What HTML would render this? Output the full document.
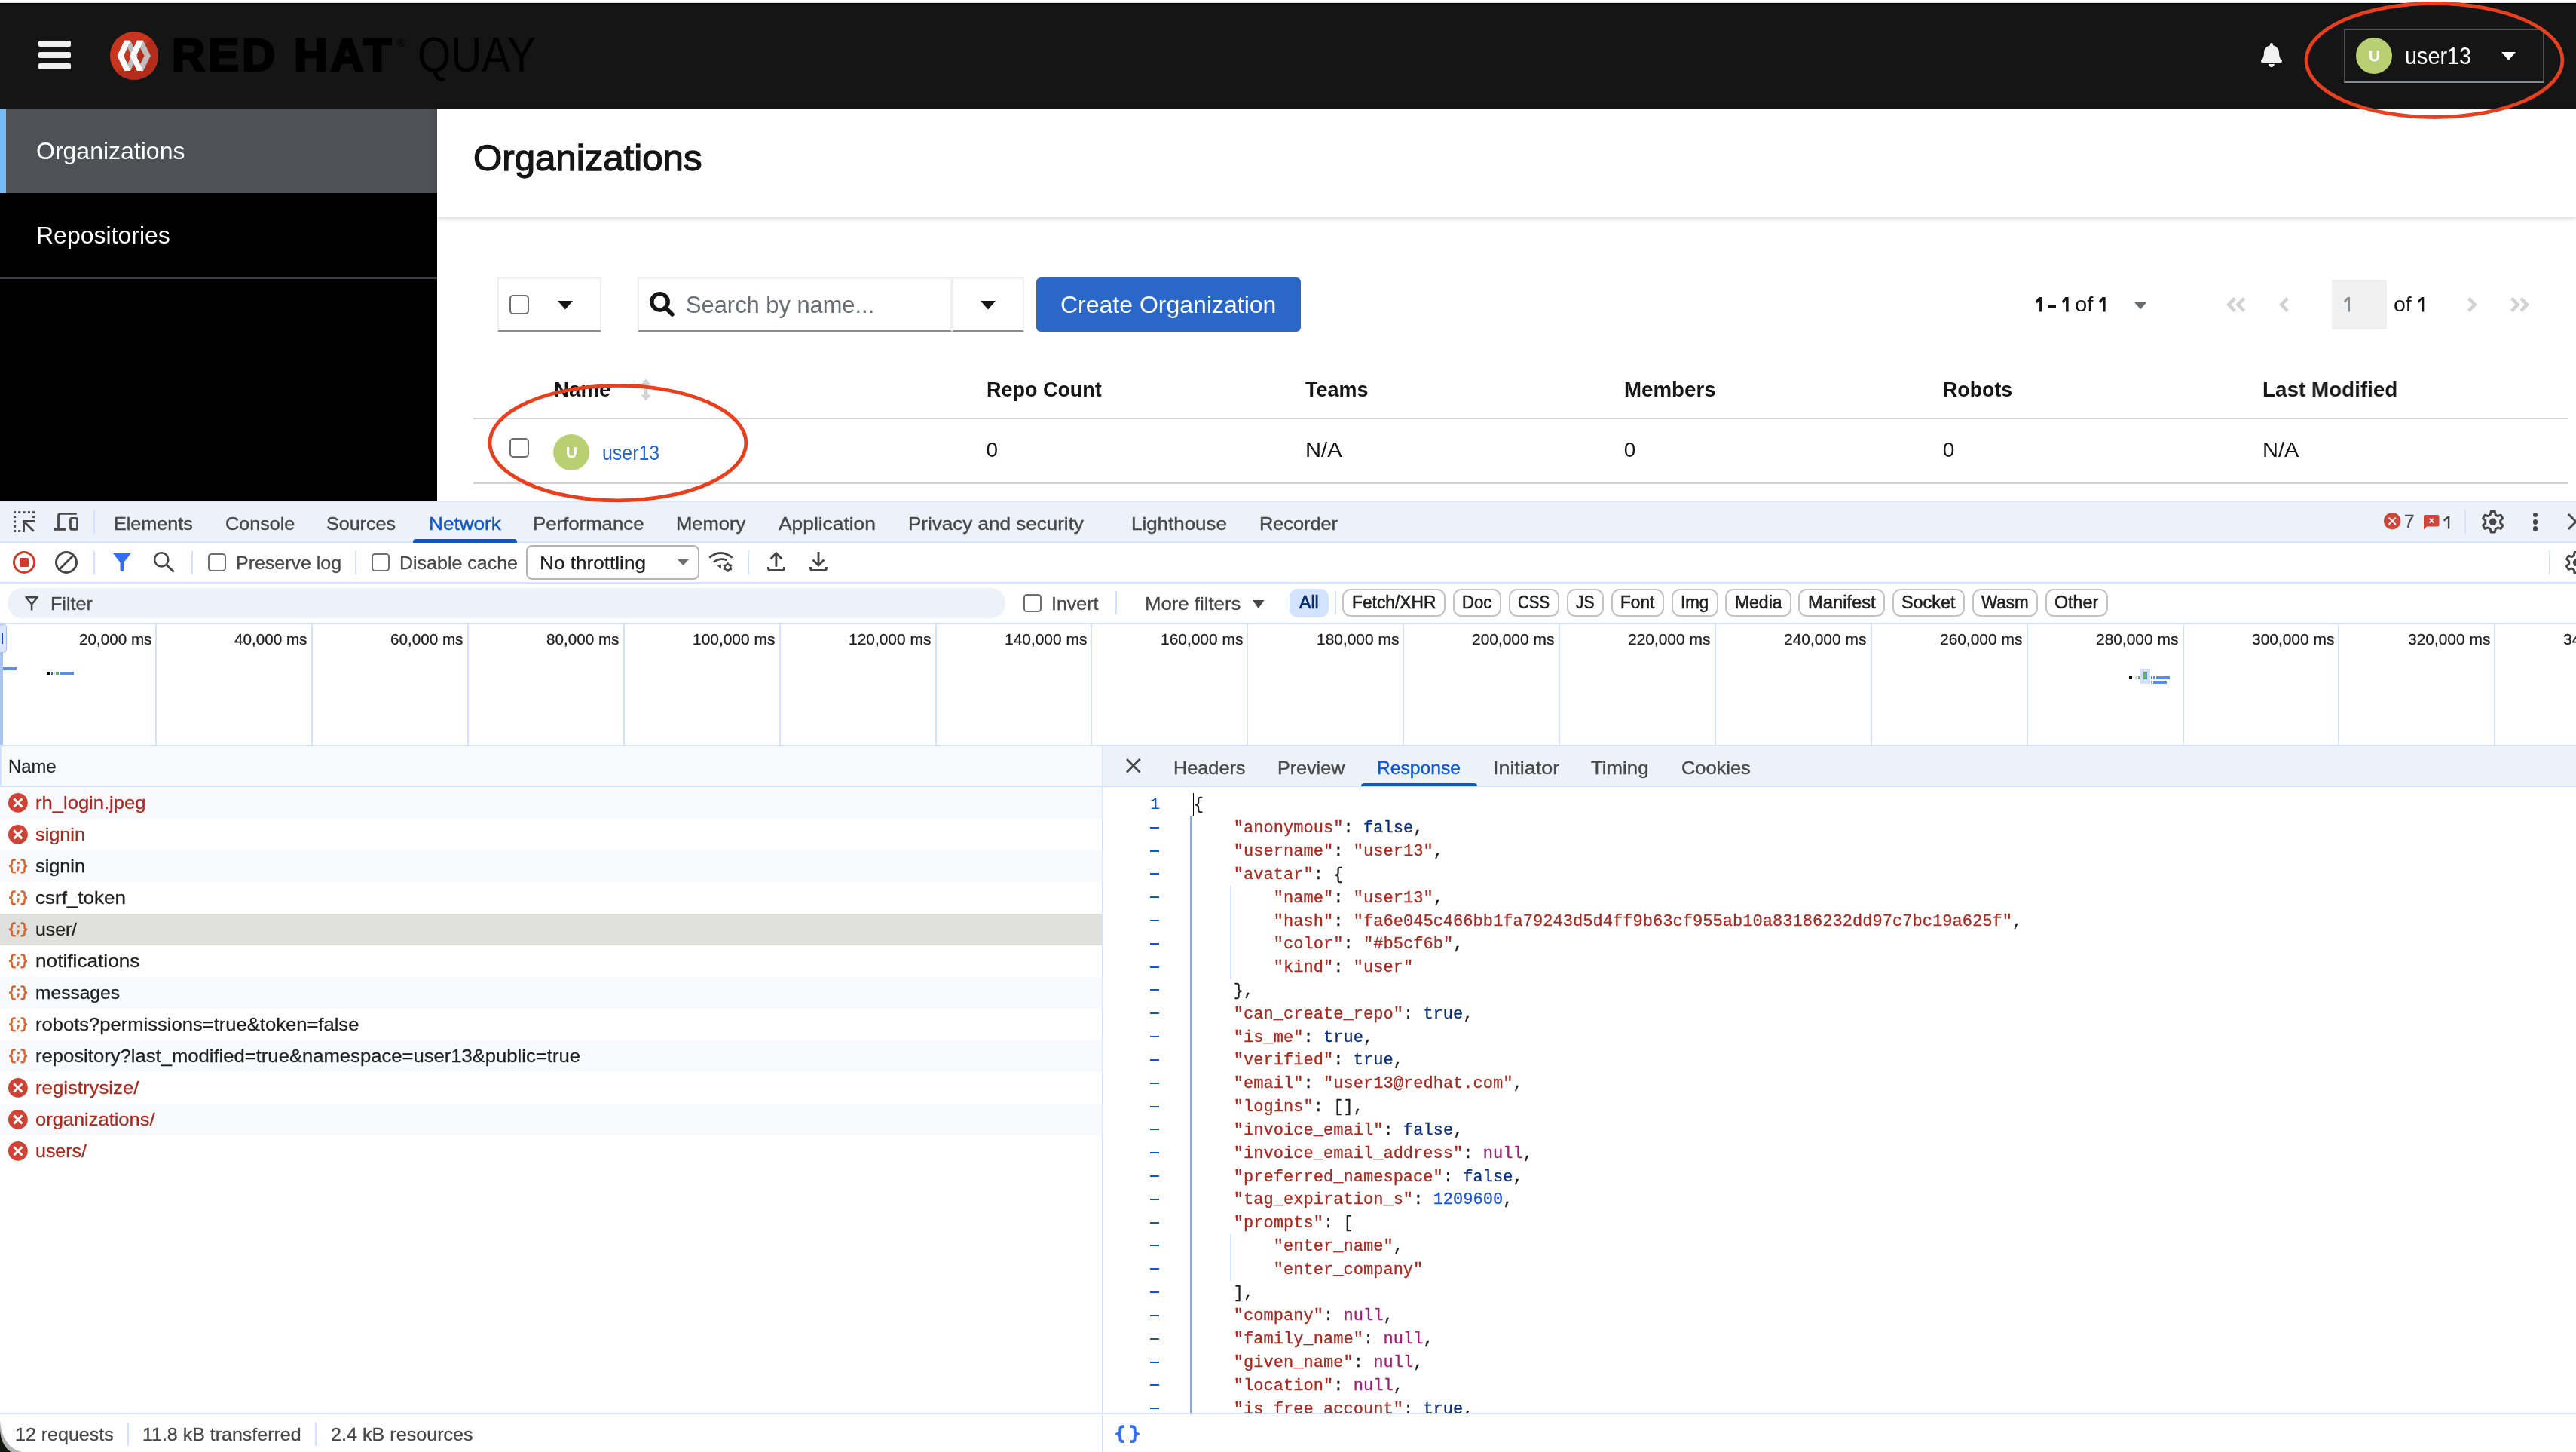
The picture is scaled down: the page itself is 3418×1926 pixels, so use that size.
<!DOCTYPE html>
<html><head><meta charset="utf-8"><title>Quay</title>
<style>
html,body{margin:0;padding:0;}
body{width:3418px;height:1926px;overflow:hidden;background:#fff;position:relative;font-family:"Liberation Sans",sans-serif;}
div,span.t,svg{position:absolute;box-sizing:border-box;}
span.t{white-space:pre;display:block;}
#root{left:0;top:0;width:3418px;height:1926px;overflow:hidden;will-change:transform;}
svg{overflow:visible;}
</style></head><body><div id="root">
<div style="left:0px;top:0px;width:3418px;height:2px;background:#ffffff;"></div>
<div style="left:0px;top:2px;width:3418px;height:2px;background:#e9e9e7;"></div>
<div style="left:0px;top:4px;width:3418px;height:140px;background:#151515;"></div>
<div style="left:0px;top:4px;width:3418px;height:1px;background:#000;"></div>
<div style="left:51px;top:54px;width:42.5px;height:7.5px;background:#f0f0f0;border-radius:2px;"></div>
<div style="left:51px;top:69px;width:42.5px;height:7.5px;background:#f0f0f0;border-radius:2px;"></div>
<div style="left:51px;top:84px;width:42.5px;height:7.5px;background:#f0f0f0;border-radius:2px;"></div>
<svg style="left:145.8px;top:42px;" width="64" height="64" viewBox="0 0 64 64">
<defs><clipPath id="lc"><circle cx="32" cy="32" r="32"/></clipPath></defs>
<circle cx="32" cy="32" r="32" fill="#c9341d"/>
<path clip-path="url(#lc)" d="M64 0 L64 64 L0 64 Z" fill="#b22e1a"/>
<g transform="translate(-145.8,-42)">
<path d="M165 53.7 L172.8 53.7 L182.4 73.9 L172.8 93.9 L165 93.9 L155.4 73.9 Z M169.1 62.9 L163.8 73.9 L169.1 84.9 L174.3 73.9 Z" fill="#bdbdbd" fill-rule="evenodd"/>
<path d="M165 53.7 L172.8 53.7 L163.8 73.9 L172.8 93.9 L165 93.9 L155.4 73.9 Z" fill="#fff"/>
<path d="M181.8 53.7 L189.8 53.7 L199.7 73.9 L189.8 93.9 L181.8 93.9 L172.2 73.9 Z M185.8 63.5 L180.5 73.9 L185.8 84.9 L191.4 73.9 Z" fill="#bdbdbd" fill-rule="evenodd"/>
<path d="M181.8 53.7 L189.8 53.7 L180.5 73.9 L189.8 93.9 L181.8 93.9 L172.2 73.9 Z" fill="#fff"/>
</g></svg>
<span class="t" style="left:228.0px;top:33.8px;height:79px;line-height:79px;font-size:61px;color:#000;font-weight:700;letter-spacing:4.120px;-webkit-text-stroke:3px #000;">RED HAT</span>
<span class="t" style="left:526.0px;top:46.5px;height:20px;line-height:20px;font-size:15px;color:#000;">®</span>
<span class="t" style="left:553.5px;top:31.3px;height:84px;line-height:84px;font-size:65px;color:#000;transform:scaleX(0.8746);transform-origin:0 50%;">QUAY</span>
<svg style="left:3000px;top:56.5px;" width="28" height="32" viewBox="0 0 28 32"><path d="M14 32c2.2 0 4-1.8 4-4h-8c0 2.2 1.8 4 4 4zm13.5-9.4c-1.2-1.3-3.5-3.2-3.5-9.6 0-4.9-3.400-8.700-8-9.700V2c0-1.100-.9-2-2-2s-2 .9-2 2v1.300C7.400 4.300 4 8.100 4 13c0 6.400-2.300 8.300-3.500 9.600-.400.400-.5.900-.5 1.400 0 1 .8 2 2 2h24c1.200 0 2-1 2-2 0-.5-.2-1-.5-1.400z" fill="#f0f0f0"/></svg>
<div style="left:3110px;top:38px;width:266px;height:72px;border:2px solid #4f5255;border-bottom-color:#8a8d90;"></div>
<div style="left:3126px;top:50px;width:48px;height:48px;background:#b8d072;border-radius:50%;"></div>
<svg style="left:3143.7px;top:66.7px;" width="12.8" height="14.6" viewBox="0 0 12.8 14.6"><path d="M1.600 0V8.200A4.800 4.800 0 0 0 11.200 8.200V0" fill="none" stroke="#fff" stroke-width="3.100"/></svg>
<span class="t" style="left:3191.0px;top:53.4px;height:42px;line-height:42px;font-size:32px;color:#fff;transform:scaleX(0.8994);transform-origin:0 50%;">user13</span>
<svg style="left:3318.5px;top:68.5px;" width="19" height="11" viewBox="0 0 19 11"><path d="M0 0H19L9.500 11Z" fill="#fff"/></svg>
<div style="left:0px;top:144px;width:580px;height:520px;background:#000;"></div>
<div style="left:0px;top:144px;width:580px;height:111.5px;background:#505156;"></div>
<div style="left:0px;top:144px;width:8px;height:111.5px;background:#73bcf7;"></div>
<span class="t" style="left:48.0px;top:179.4px;height:42px;line-height:42px;font-size:32px;color:#fff;transform:scaleX(0.9978);transform-origin:0 50%;">Organizations</span>
<span class="t" style="left:48.0px;top:291.4px;height:42px;line-height:42px;font-size:32px;color:#fff;transform:scaleX(0.9980);transform-origin:0 50%;">Repositories</span>
<div style="left:0px;top:368px;width:580px;height:2px;background:#3c3f42;"></div>
<div style="left:580px;top:144px;width:2838px;height:143.5px;background:#fff;box-shadow:0 2px 6px rgba(3,3,3,.16);"></div>
<span class="t" style="left:627.5px;top:179.1px;height:62px;line-height:62px;font-size:48px;color:#151515;transform:scaleX(1.0248);transform-origin:0 50%;-webkit-text-stroke:1.300px #151515;">Organizations</span>
<div style="left:660px;top:368px;width:137.8px;height:72px;background:#fff;border:2px solid #f0f0f0;border-bottom:2px solid #8a8d90;"></div>
<div style="left:676px;top:390.7px;width:26px;height:26px;background:#fff;border:2px solid #6e6e6e;border-radius:5px;"></div>
<svg style="left:739.5px;top:398.5px;" width="20" height="11.5" viewBox="0 0 20 11.5"><path d="M0 0H20L10 11.500Z" fill="#151515"/></svg>
<div style="left:846px;top:368px;width:417px;height:72px;background:#fff;border:2px solid #f0f0f0;border-bottom:2px solid #8a8d90;"></div>
<div style="left:1263px;top:368px;width:95.5px;height:72px;background:#fff;border:2px solid #f0f0f0;border-bottom:2px solid #8a8d90;"></div>
<svg style="left:861.7px;top:387.2px;" width="33" height="33" viewBox="0 0 33 33"><circle cx="13.500" cy="13.300" r="10.700" fill="none" stroke="#151515" stroke-width="5.400"/><path d="M21 21L30 30" stroke="#151515" stroke-width="5.400" stroke-linecap="round"/></svg>
<span class="t" style="left:909.8px;top:383.4px;height:42px;line-height:42px;font-size:32px;color:#6a6e73;transform:scaleX(0.9635);transform-origin:0 50%;">Search by name...</span>
<svg style="left:1300.5px;top:398.5px;" width="20" height="11.5" viewBox="0 0 20 11.5"><path d="M0 0H20L10 11.500Z" fill="#151515"/></svg>
<div style="left:1374.7px;top:367.6px;width:351.3px;height:72.2px;background:#2b66c9;border-radius:6px;"></div>
<span class="t" style="left:1407.0px;top:383.4px;height:42px;line-height:42px;font-size:32px;color:#fff;">Create Organization</span>
<svg style="left:2701px;top:394.3px;" width="8.6" height="19.4" viewBox="0 0 8.6 19.4"><path d="M0 5.24L4.50 0H8.6V19.4H5.1V4.02L1.93 8.56Z" fill="#151515"/></svg>
<div style="left:2718px;top:404px;width:10.2px;height:3.5px;background:#151515;"></div>
<svg style="left:2736.2px;top:394.3px;" width="8.6" height="19.4" viewBox="0 0 8.6 19.4"><path d="M0 5.24L4.50 0H8.6V19.4H5.1V4.02L1.93 8.56Z" fill="#151515"/></svg>
<span class="t" style="left:2753.4px;top:385.9px;height:36px;line-height:36px;font-size:28px;color:#151515;transform:scaleX(1.0449);transform-origin:0 50%;">of</span>
<svg style="left:2785.3px;top:394.3px;" width="8.6" height="19.4" viewBox="0 0 8.6 19.4"><path d="M0 5.24L4.50 0H8.6V19.4H5.1V4.02L1.93 8.56Z" fill="#151515"/></svg>
<svg style="left:2831.9px;top:400.5px;" width="16.2" height="9.2" viewBox="0 0 16.2 9.2"><path d="M0 0H16.200L8.100 9.200Z" fill="#6a6e73"/></svg>
<svg style="left:2953.6px;top:393.5px;" width="25.2" height="20" viewBox="0 0 25.2 20"><g ><path d="M11.300 1.600L3.100 10L11.300 18.400" fill="none" stroke="#d2d2d2" stroke-width="4.400"/><path d="M11.300 1.600L3.100 10L11.300 18.400" transform="translate(12.300,0)" fill="none" stroke="#d2d2d2" stroke-width="4.400"/></g></svg>
<svg style="left:3023.5px;top:393.5px;" width="12.9" height="20" viewBox="0 0 12.9 20"><g ><path d="M11.300 1.600L3.100 10L11.300 18.400" fill="none" stroke="#d2d2d2" stroke-width="4.400"/></g></svg>
<div style="left:3093.8px;top:370.8px;width:73px;height:66.2px;background:#f0f0f0;"></div>
<svg style="left:3109.5px;top:394.3px;" width="8" height="19.4" viewBox="0 0 8 19.4"><path d="M0 5.24L4.80 0H8V19.4H5.4V2.99L1.43 7.71Z" fill="#8a8d90"/></svg>
<span class="t" style="left:3175.7px;top:385.9px;height:36px;line-height:36px;font-size:28px;color:#151515;transform:scaleX(1.0192);transform-origin:0 50%;">of</span>
<svg style="left:3207.5px;top:394.3px;" width="8.3" height="19.4" viewBox="0 0 8.3 19.4"><path d="M0 5.24L5.10 0H8.3V19.4H5.700000000000001V2.99L1.43 7.71Z" fill="#151515"/></svg>
<svg style="left:3273.5px;top:393.5px;" width="12.9" height="20" viewBox="0 0 12.9 20"><g transform="translate(12.9,0) scale(-1,1)"><path d="M11.300 1.600L3.100 10L11.300 18.400" fill="none" stroke="#d2d2d2" stroke-width="4.400"/></g></svg>
<svg style="left:3331.2px;top:393.5px;" width="25.2" height="20" viewBox="0 0 25.2 20"><g transform="translate(25.2,0) scale(-1,1)"><path d="M11.300 1.600L3.100 10L11.300 18.400" fill="none" stroke="#d2d2d2" stroke-width="4.400"/><path d="M11.300 1.600L3.100 10L11.300 18.400" transform="translate(12.300,0)" fill="none" stroke="#d2d2d2" stroke-width="4.400"/></g></svg>
<span class="t" style="left:734.6px;top:499.4px;height:36px;line-height:36px;font-size:28px;color:#151515;font-weight:700;transform:scaleX(0.9887);transform-origin:0 50%;">Name</span>
<svg style="left:851px;top:503px;" width="12" height="28" viewBox="0 0 12 28"><path d="M6 0L12 7H0Z M6 28L12 21H0Z M3.900 6H8.100V22H3.900Z" fill="#d2d2d2" stroke="#d2d2d2" stroke-width="0.800" stroke-linejoin="round"/></svg>
<span class="t" style="left:1309.0px;top:499.4px;height:36px;line-height:36px;font-size:28px;color:#151515;font-weight:700;transform:scaleX(0.9632);transform-origin:0 50%;">Repo Count</span>
<span class="t" style="left:1731.8px;top:499.4px;height:36px;line-height:36px;font-size:28px;color:#151515;font-weight:700;transform:scaleX(0.9626);transform-origin:0 50%;">Teams</span>
<span class="t" style="left:2155.3px;top:499.4px;height:36px;line-height:36px;font-size:28px;color:#151515;font-weight:700;transform:scaleX(0.9891);transform-origin:0 50%;">Members</span>
<span class="t" style="left:2578.3px;top:499.4px;height:36px;line-height:36px;font-size:28px;color:#151515;font-weight:700;transform:scaleX(0.9562);transform-origin:0 50%;">Robots</span>
<span class="t" style="left:3001.7px;top:499.4px;height:36px;line-height:36px;font-size:28px;color:#151515;font-weight:700;transform:scaleX(0.9937);transform-origin:0 50%;">Last Modified</span>
<div style="left:628px;top:554px;width:2780px;height:2px;background:#d2d2d2;"></div>
<div style="left:628px;top:639.5px;width:2780px;height:2px;background:#d2d2d2;"></div>
<div style="left:676px;top:581px;width:26px;height:26px;background:#fff;border:2px solid #6e6e6e;border-radius:5px;"></div>
<div style="left:733.9px;top:575.8px;width:48.4px;height:48.4px;background:#b8d072;border-radius:50%;"></div>
<svg style="left:751.8px;top:592.6px;" width="12.8" height="14.6" viewBox="0 0 12.8 14.6"><path d="M1.600 0V8.200A4.800 4.800 0 0 0 11.200 8.200V0" fill="none" stroke="#fff" stroke-width="3.100"/></svg>
<span class="t" style="left:799.3px;top:582.7px;height:36px;line-height:36px;font-size:28px;color:#2b66c9;transform:scaleX(0.8900);transform-origin:0 50%;">user13</span>
<span class="t" style="left:1308.5px;top:578.9px;height:36px;line-height:36px;font-size:28px;color:#151515;">0</span>
<span class="t" style="left:1731.8px;top:578.9px;height:36px;line-height:36px;font-size:28px;color:#151515;transform:scaleX(1.0434);transform-origin:0 50%;">N/A</span>
<span class="t" style="left:2154.8px;top:578.9px;height:36px;line-height:36px;font-size:28px;color:#151515;">0</span>
<span class="t" style="left:2577.8px;top:578.9px;height:36px;line-height:36px;font-size:28px;color:#151515;">0</span>
<span class="t" style="left:3001.7px;top:578.9px;height:36px;line-height:36px;font-size:28px;color:#151515;transform:scaleX(1.0348);transform-origin:0 50%;">N/A</span>
<div style="left:0px;top:664px;width:3418px;height:1262px;background:#fff;"></div>
<div style="left:0px;top:664px;width:3418px;height:56px;background:#edf1fa;border-top:2px solid #d3e3fd;border-bottom:2px solid #d3e3fd;"></div>
<div style="left:124px;top:676px;width:2px;height:32px;background:#d3e3fd;"></div>
<span class="t" style="left:150.6px;top:679.3px;height:32px;line-height:32px;font-size:24.3px;color:#474747;transform:scaleX(1.0347);transform-origin:0 50%;-webkit-text-stroke:0.4px currentColor;">Elements</span>
<span class="t" style="left:299.0px;top:679.3px;height:32px;line-height:32px;font-size:24.3px;color:#474747;transform:scaleX(1.0353);transform-origin:0 50%;-webkit-text-stroke:0.4px currentColor;">Console</span>
<span class="t" style="left:432.8px;top:679.3px;height:32px;line-height:32px;font-size:24.3px;color:#474747;transform:scaleX(1.0321);transform-origin:0 50%;-webkit-text-stroke:0.4px currentColor;">Sources</span>
<span class="t" style="left:568.7px;top:679.3px;height:32px;line-height:32px;font-size:24.3px;color:#0b57d0;transform:scaleX(1.0761);transform-origin:0 50%;-webkit-text-stroke:0.4px currentColor;">Network</span>
<span class="t" style="left:706.5px;top:679.3px;height:32px;line-height:32px;font-size:24.3px;color:#474747;transform:scaleX(1.0604);transform-origin:0 50%;-webkit-text-stroke:0.4px currentColor;">Performance</span>
<span class="t" style="left:896.7px;top:679.3px;height:32px;line-height:32px;font-size:24.3px;color:#474747;transform:scaleX(1.0519);transform-origin:0 50%;-webkit-text-stroke:0.4px currentColor;">Memory</span>
<span class="t" style="left:1033.0px;top:679.3px;height:32px;line-height:32px;font-size:24.3px;color:#474747;transform:scaleX(1.0844);transform-origin:0 50%;-webkit-text-stroke:0.4px currentColor;">Application</span>
<span class="t" style="left:1204.6px;top:679.3px;height:32px;line-height:32px;font-size:24.3px;color:#474747;transform:scaleX(1.0712);transform-origin:0 50%;-webkit-text-stroke:0.4px currentColor;">Privacy and security</span>
<span class="t" style="left:1500.8px;top:679.3px;height:32px;line-height:32px;font-size:24.3px;color:#474747;transform:scaleX(1.0673);transform-origin:0 50%;-webkit-text-stroke:0.4px currentColor;">Lighthouse</span>
<span class="t" style="left:1670.8px;top:679.3px;height:32px;line-height:32px;font-size:24.3px;color:#474747;transform:scaleX(1.0407);transform-origin:0 50%;-webkit-text-stroke:0.4px currentColor;">Recorder</span>
<div style="left:548px;top:715px;width:137.6px;height:4.5px;background:#0b57d0;border-radius:4px 4px 0 0;"></div>
<svg style="left:3162.8px;top:679.7px;" width="22.4" height="22.4" viewBox="0 0 22.4 22.4"><circle cx="11.200" cy="11.200" r="11.200" fill="#d0453a"/><path d="M6.600 6.600L15.800 15.800M15.800 6.600L6.600 15.800" stroke="#fff" stroke-width="1.900"/></svg>
<span class="t" style="left:3190.0px;top:675.9px;height:32px;line-height:32px;font-size:24.3px;color:#474747;-webkit-text-stroke:0.300px currentColor;">7</span>
<svg style="left:3216.3px;top:682.5px;" width="20.5" height="19.5" viewBox="0 0 20.5 19.5"><path d="M2 0H18.500C19.600 0 20.500 .9 20.500 2V13.500C20.500 14.600 19.600 15.500 18.500 15.500H4L0 19.500V2C0 .9 .9 0 2 0Z" fill="#d0453a"/><path d="M7.500 4.800L13 10.300M13 4.800L7.500 10.300" stroke="#fff" stroke-width="1.700"/></svg>
<svg style="left:3241.6px;top:685.2px;" width="8.3" height="16.6" viewBox="0 0 8.3 16.6"><path d="M0 4.48L5.30 0H8.3V16.6H5.9V2.76L1.32 6.76Z" fill="#474747"/></svg>
<div style="left:3270px;top:676px;width:2px;height:31.5px;background:#d3e3fd;"></div>
<svg style="left:3292px;top:677.1px;" width="31.4" height="30.9" viewBox="0 0 30 29.5"><path d="M12.500 1.500H17.500L18.300 5.600L21.200 7.300L25.100 5.900L27.600 10.200L24.500 12.900V16.300L27.600 19L25.100 23.300L21.200 21.900L18.300 23.600L17.500 27.700H12.500L11.700 23.600L8.800 21.900L4.900 23.300L2.400 19L5.500 16.300V12.900L2.400 10.200L4.900 5.900L8.800 7.300L11.700 5.600Z" fill="none" stroke="#474747" stroke-width="2.800" stroke-linejoin="round"/><circle cx="15" cy="14.600" r="4.600" fill="#474747"/></svg>
<div style="left:3360.6px;top:679.7px;width:6.6px;height:6.6px;background:#474747;border-radius:50%;"></div>
<div style="left:3360.6px;top:689.0px;width:6.6px;height:6.6px;background:#474747;border-radius:50%;"></div>
<div style="left:3360.6px;top:698.3000000000001px;width:6.6px;height:6.6px;background:#474747;border-radius:50%;"></div>
<svg style="left:3407px;top:681px;" width="22" height="22" viewBox="0 0 22 22"><path d="M1 1L21 21M21 1L1 21" stroke="#474747" stroke-width="3"/></svg>
<div style="left:0px;top:720px;width:3418px;height:54px;background:#fff;border-bottom:2px solid #d3e3fd;"></div>
<svg style="left:16.8px;top:731.2px;" width="30" height="30" viewBox="0 0 30 30"><circle cx="15" cy="15" r="13.500" fill="none" stroke="#d03b2f" stroke-width="3"/><rect x="9" y="9" width="12" height="12" rx="1.500" fill="#d03b2f"/></svg>
<svg style="left:73px;top:731.2px;" width="30" height="30" viewBox="0 0 30 30"><circle cx="15" cy="15" r="13.500" fill="none" stroke="#474747" stroke-width="3"/><path d="M24.500 5.500L5.500 24.500" stroke="#474747" stroke-width="3"/></svg>
<div style="left:124px;top:730.5px;width:2px;height:31px;background:#d3e3fd;"></div>
<div style="left:254px;top:730.5px;width:2px;height:31px;background:#d3e3fd;"></div>
<div style="left:276.3px;top:734.2px;width:23.5px;height:23.5px;background:#fff;border:2px solid #6e6e6e;border-radius:4.500px;"></div>
<span class="t" style="left:312.5px;top:730.9px;height:32px;line-height:32px;font-size:24.3px;color:#474747;transform:scaleX(1.0270);transform-origin:0 50%;-webkit-text-stroke:0.300px currentColor;">Preserve log</span>
<div style="left:470.7px;top:730.5px;width:2px;height:31px;background:#d3e3fd;"></div>
<div style="left:493px;top:734.2px;width:23.5px;height:23.5px;background:#fff;border:2px solid #6e6e6e;border-radius:4.500px;"></div>
<span class="t" style="left:530.0px;top:730.9px;height:32px;line-height:32px;font-size:24.3px;color:#474747;transform:scaleX(1.0286);transform-origin:0 50%;-webkit-text-stroke:0.300px currentColor;">Disable cache</span>
<div style="left:698.3px;top:722.6px;width:229.4px;height:46.2px;background:#fff;border:2px solid #b4b4b4;border-radius:8px;"></div>
<span class="t" style="left:716.0px;top:730.9px;height:32px;line-height:32px;font-size:24.3px;color:#1f1f1f;transform:scaleX(1.0762);transform-origin:0 50%;-webkit-text-stroke:0.300px currentColor;">No throttling</span>
<svg style="left:898.5px;top:742px;" width="15" height="8" viewBox="0 0 15 8"><path d="M0 0H15L7.500 8Z" fill="#6e6e6e"/></svg>
<div style="left:992px;top:730px;width:2px;height:32px;background:#d3e3fd;"></div>
<div style="left:3382px;top:730px;width:2px;height:31.5px;background:#d3e3fd;"></div>
<svg style="left:3402.5px;top:731.2px;" width="31.4" height="30.9" viewBox="0 0 30 29.5"><path d="M12.500 1.500H17.500L18.300 5.600L21.200 7.300L25.100 5.900L27.600 10.200L24.500 12.900V16.300L27.600 19L25.100 23.300L21.200 21.900L18.300 23.600L17.500 27.700H12.500L11.700 23.600L8.800 21.900L4.900 23.300L2.400 19L5.500 16.300V12.900L2.400 10.200L4.900 5.900L8.800 7.300L11.700 5.600Z" fill="none" stroke="#474747" stroke-width="2.800" stroke-linejoin="round"/><circle cx="15" cy="14.600" r="4.600" fill="#474747"/></svg>
<div style="left:0px;top:774px;width:3418px;height:54px;background:#fff;border-bottom:2px solid #d3e3fd;"></div>
<div style="left:9.7px;top:780.4px;width:1324.3px;height:39.6px;background:#edf1fa;border-radius:20px;"></div>
<span class="t" style="left:66.8px;top:784.9px;height:32px;line-height:32px;font-size:24.3px;color:#474747;transform:scaleX(1.0353);transform-origin:0 50%;-webkit-text-stroke:0.300px currentColor;">Filter</span>
<div style="left:1358px;top:788.2px;width:23.5px;height:23.5px;background:#fff;border:2px solid #6e6e6e;border-radius:4.500px;"></div>
<span class="t" style="left:1394.8px;top:784.9px;height:32px;line-height:32px;font-size:24.3px;color:#474747;transform:scaleX(1.0284);transform-origin:0 50%;-webkit-text-stroke:0.300px currentColor;">Invert</span>
<div style="left:1480.4px;top:784px;width:2px;height:31px;background:#d3e3fd;"></div>
<span class="t" style="left:1519.0px;top:784.9px;height:32px;line-height:32px;font-size:24.3px;color:#474747;transform:scaleX(1.0602);transform-origin:0 50%;-webkit-text-stroke:0.300px currentColor;">More filters</span>
<svg style="left:1662px;top:796px;" width="15.5" height="11" viewBox="0 0 15.5 11"><path d="M0 0H15.500L7.750 11Z" fill="#474747"/></svg>
<div style="left:1711px;top:781px;width:52px;height:37.8px;background:#d3e3fd;border-radius:11px;"></div>
<span class="t" style="left:1724.0px;top:784.4px;height:31px;line-height:31px;font-size:23.5px;color:#062e6f;transform:scaleX(0.9841);transform-origin:0 50%;-webkit-text-stroke:0.7px currentColor;">All</span>
<div style="left:1770.7px;top:784px;width:2px;height:31px;background:#d3e3fd;"></div>
<div style="left:1781.4px;top:781.2px;width:136.5999999999999px;height:37.3px;background:#fff;border:2px solid #c4c4c4;border-radius:11px;"></div>
<span class="t" style="left:1793.9px;top:784.4px;height:31px;line-height:31px;font-size:23.5px;color:#1f1f1f;transform:scaleX(0.9694);transform-origin:0 50%;-webkit-text-stroke:0.6px currentColor;">Fetch/XHR</span>
<div style="left:1927.8px;top:781.2px;width:64.40000000000009px;height:37.3px;background:#fff;border:2px solid #c4c4c4;border-radius:11px;"></div>
<span class="t" style="left:1940.3px;top:784.4px;height:31px;line-height:31px;font-size:23.5px;color:#1f1f1f;transform:scaleX(0.9380);transform-origin:0 50%;-webkit-text-stroke:0.6px currentColor;">Doc</span>
<div style="left:2001.7px;top:781.2px;width:67.20000000000005px;height:37.3px;background:#fff;border:2px solid #c4c4c4;border-radius:11px;"></div>
<span class="t" style="left:2014.2px;top:784.4px;height:31px;line-height:31px;font-size:23.5px;color:#1f1f1f;transform:scaleX(0.8692);transform-origin:0 50%;-webkit-text-stroke:0.6px currentColor;">CSS</span>
<div style="left:2078.6px;top:781.2px;width:49.70000000000027px;height:37.3px;background:#fff;border:2px solid #c4c4c4;border-radius:11px;"></div>
<span class="t" style="left:2091.1px;top:784.4px;height:31px;line-height:31px;font-size:23.5px;color:#1f1f1f;transform:scaleX(0.8934);transform-origin:0 50%;-webkit-text-stroke:0.6px currentColor;">JS</span>
<div style="left:2137.6px;top:781.2px;width:70.59999999999991px;height:37.3px;background:#fff;border:2px solid #c4c4c4;border-radius:11px;"></div>
<span class="t" style="left:2150.1px;top:784.4px;height:31px;line-height:31px;font-size:23.5px;color:#1f1f1f;transform:scaleX(0.9654);transform-origin:0 50%;-webkit-text-stroke:0.6px currentColor;">Font</span>
<div style="left:2217.5px;top:781.2px;width:62.5px;height:37.3px;background:#fff;border:2px solid #c4c4c4;border-radius:11px;"></div>
<span class="t" style="left:2230.0px;top:784.4px;height:31px;line-height:31px;font-size:23.5px;color:#1f1f1f;transform:scaleX(0.9521);transform-origin:0 50%;-webkit-text-stroke:0.6px currentColor;">Img</span>
<div style="left:2289.4px;top:781.2px;width:87.69999999999982px;height:37.3px;background:#fff;border:2px solid #c4c4c4;border-radius:11px;"></div>
<span class="t" style="left:2301.9px;top:784.4px;height:31px;line-height:31px;font-size:23.5px;color:#1f1f1f;transform:scaleX(0.9764);transform-origin:0 50%;-webkit-text-stroke:0.6px currentColor;">Media</span>
<div style="left:2386.4px;top:781.2px;width:114.90000000000009px;height:37.3px;background:#fff;border:2px solid #c4c4c4;border-radius:11px;"></div>
<span class="t" style="left:2398.9px;top:784.4px;height:31px;line-height:31px;font-size:23.5px;color:#1f1f1f;transform:scaleX(1.0099);transform-origin:0 50%;-webkit-text-stroke:0.6px currentColor;">Manifest</span>
<div style="left:2510.6px;top:781.2px;width:96.70000000000027px;height:37.3px;background:#fff;border:2px solid #c4c4c4;border-radius:11px;"></div>
<span class="t" style="left:2523.1px;top:784.4px;height:31px;line-height:31px;font-size:23.5px;color:#1f1f1f;transform:scaleX(0.9952);transform-origin:0 50%;-webkit-text-stroke:0.6px currentColor;">Socket</span>
<div style="left:2616.6px;top:781.2px;width:87.70000000000027px;height:37.3px;background:#fff;border:2px solid #c4c4c4;border-radius:11px;"></div>
<span class="t" style="left:2629.1px;top:784.4px;height:31px;line-height:31px;font-size:23.5px;color:#1f1f1f;transform:scaleX(0.9512);transform-origin:0 50%;-webkit-text-stroke:0.6px currentColor;">Wasm</span>
<div style="left:2713.7px;top:781.2px;width:83.40000000000009px;height:37.3px;background:#fff;border:2px solid #c4c4c4;border-radius:11px;"></div>
<span class="t" style="left:2726.2px;top:784.4px;height:31px;line-height:31px;font-size:23.5px;color:#1f1f1f;transform:scaleX(0.9902);transform-origin:0 50%;-webkit-text-stroke:0.6px currentColor;">Other</span>
<svg style="left:0px;top:0px;" width="3418" height="1926" viewBox="0 0 3418 1926"><rect x="18.15" y="678.150" width="3" height="2.900" fill="#474747"/><rect x="24.2" y="678.150" width="3" height="2.900" fill="#474747"/><rect x="30.5" y="678.150" width="3" height="2.900" fill="#474747"/><rect x="37" y="678.150" width="3" height="2.900" fill="#474747"/><rect x="43.1" y="678.150" width="3" height="2.900" fill="#474747"/><rect x="18.150" y="684.2" width="3" height="2.900" fill="#474747"/><rect x="18.150" y="690.5" width="3" height="2.900" fill="#474747"/><rect x="18.150" y="696.8" width="3" height="2.900" fill="#474747"/><rect x="18.150" y="703.1" width="3" height="2.900" fill="#474747"/><rect x="43.100" y="684.200" width="3" height="2.900" fill="#474747"/><rect x="24.200" y="703.100" width="3" height="2.900" fill="#474747"/><path d="M31.500 706V691.500H46M32 692L44.700 704.700" fill="none" stroke="#474747" stroke-width="2.900"/><path d="M77.500 700.500V684.500Q77.500 681.400 80.600 681.400H101.800" fill="none" stroke="#474747" stroke-width="2.800"/><rect x="72" y="700.300" width="15.700" height="3.500" fill="#474747"/><rect x="93.500" y="687.500" width="9" height="14.900" rx="2" fill="none" stroke="#474747" stroke-width="2.800"/><path d="M150 734H173.700L164.200 746.300V756.200Q164.200 757.700 162.700 757.700H161Q159.500 757.700 159.500 756.200V746.300Z" fill="#346ef0"/><circle cx="214.200" cy="742.400" r="9.100" fill="none" stroke="#474747" stroke-width="2.600"/><path d="M220.700 749L230.600 758.600" stroke="#474747" stroke-width="2.900"/><path d="M941.200 739.800Q956.200 727.200 971.600 739.800" fill="none" stroke="#474747" stroke-width="2.700"/><path d="M946.800 745.800Q955 739 964.200 743" fill="none" stroke="#474747" stroke-width="2.700"/><path d="M951.700 750.500L956.900 748.200V754.500Z" fill="#474747"/><circle cx="965.500" cy="752.500" r="3.900" fill="none" stroke="#474747" stroke-width="2.400"/><path d="M965.500 746.200V758.800M960 749.350L971 755.650M960 755.650L971 749.350" stroke="#474747" stroke-width="2.700"/><circle cx="965.500" cy="752.500" r="2.500" fill="#fff"/><path d="M1029.900 751.700V734M1022.600 741.200L1029.900 733.900L1037.300 741.200" fill="none" stroke="#474747" stroke-width="2.900"/><path d="M1019.450 752V753.800Q1019.450 756.550 1022.200 756.550H1037.700Q1040.450 756.550 1040.450 753.800V752" fill="none" stroke="#474747" stroke-width="2.900"/><path d="M1086 732.100V749.500M1078.500 742.500L1086 750L1093.400 742.500" fill="none" stroke="#474747" stroke-width="2.900"/><path d="M1075.450 752V753.800Q1075.450 756.550 1078.200 756.550H1093.700Q1096.450 756.550 1096.450 753.800V752" fill="none" stroke="#474747" stroke-width="2.900"/><path d="M34.500 792.300H49.700L42.100 801.500Z" fill="none" stroke="#474747" stroke-width="2.400" stroke-linejoin="round"/><path d="M42.100 801V809.600" stroke="#474747" stroke-width="2.600"/></svg>
<div style="left:0px;top:828px;width:3418px;height:160px;background:#fff;"></div>
<div style="left:206.2px;top:828px;width:2px;height:160px;background:#d3e3fd;"></div>
<span class="t" style="left:104.5px;top:834.8px;height:26px;line-height:26px;font-size:19.8px;color:#1f1f1f;transform:scaleX(1.0440);transform-origin:0 50%;-webkit-text-stroke:0.300px currentColor;">20,000 ms</span>
<div style="left:413.0px;top:828px;width:2px;height:160px;background:#d3e3fd;"></div>
<span class="t" style="left:311.3px;top:834.8px;height:26px;line-height:26px;font-size:19.8px;color:#1f1f1f;transform:scaleX(1.0440);transform-origin:0 50%;-webkit-text-stroke:0.300px currentColor;">40,000 ms</span>
<div style="left:619.9px;top:828px;width:2px;height:160px;background:#d3e3fd;"></div>
<span class="t" style="left:518.2px;top:834.8px;height:26px;line-height:26px;font-size:19.8px;color:#1f1f1f;transform:scaleX(1.0440);transform-origin:0 50%;-webkit-text-stroke:0.300px currentColor;">60,000 ms</span>
<div style="left:826.8px;top:828px;width:2px;height:160px;background:#d3e3fd;"></div>
<span class="t" style="left:725.1px;top:834.8px;height:26px;line-height:26px;font-size:19.8px;color:#1f1f1f;transform:scaleX(1.0440);transform-origin:0 50%;-webkit-text-stroke:0.300px currentColor;">80,000 ms</span>
<div style="left:1033.6px;top:828px;width:2px;height:160px;background:#d3e3fd;"></div>
<span class="t" style="left:919.0px;top:834.8px;height:26px;line-height:26px;font-size:19.8px;color:#1f1f1f;transform:scaleX(1.0579);transform-origin:0 50%;-webkit-text-stroke:0.300px currentColor;">100,000 ms</span>
<div style="left:1240.5px;top:828px;width:2px;height:160px;background:#d3e3fd;"></div>
<span class="t" style="left:1125.9px;top:834.8px;height:26px;line-height:26px;font-size:19.8px;color:#1f1f1f;transform:scaleX(1.0579);transform-origin:0 50%;-webkit-text-stroke:0.300px currentColor;">120,000 ms</span>
<div style="left:1447.4px;top:828px;width:2px;height:160px;background:#d3e3fd;"></div>
<span class="t" style="left:1332.7px;top:834.8px;height:26px;line-height:26px;font-size:19.8px;color:#1f1f1f;transform:scaleX(1.0579);transform-origin:0 50%;-webkit-text-stroke:0.300px currentColor;">140,000 ms</span>
<div style="left:1654.3px;top:828px;width:2px;height:160px;background:#d3e3fd;"></div>
<span class="t" style="left:1539.6px;top:834.8px;height:26px;line-height:26px;font-size:19.8px;color:#1f1f1f;transform:scaleX(1.0579);transform-origin:0 50%;-webkit-text-stroke:0.300px currentColor;">160,000 ms</span>
<div style="left:1861.1px;top:828px;width:2px;height:160px;background:#d3e3fd;"></div>
<span class="t" style="left:1746.5px;top:834.8px;height:26px;line-height:26px;font-size:19.8px;color:#1f1f1f;transform:scaleX(1.0579);transform-origin:0 50%;-webkit-text-stroke:0.300px currentColor;">180,000 ms</span>
<div style="left:2068.0px;top:828px;width:2px;height:160px;background:#d3e3fd;"></div>
<span class="t" style="left:1953.4px;top:834.8px;height:26px;line-height:26px;font-size:19.8px;color:#1f1f1f;transform:scaleX(1.0579);transform-origin:0 50%;-webkit-text-stroke:0.300px currentColor;">200,000 ms</span>
<div style="left:2274.9px;top:828px;width:2px;height:160px;background:#d3e3fd;"></div>
<span class="t" style="left:2160.2px;top:834.8px;height:26px;line-height:26px;font-size:19.8px;color:#1f1f1f;transform:scaleX(1.0579);transform-origin:0 50%;-webkit-text-stroke:0.300px currentColor;">220,000 ms</span>
<div style="left:2481.7px;top:828px;width:2px;height:160px;background:#d3e3fd;"></div>
<span class="t" style="left:2367.1px;top:834.8px;height:26px;line-height:26px;font-size:19.8px;color:#1f1f1f;transform:scaleX(1.0579);transform-origin:0 50%;-webkit-text-stroke:0.300px currentColor;">240,000 ms</span>
<div style="left:2688.6px;top:828px;width:2px;height:160px;background:#d3e3fd;"></div>
<span class="t" style="left:2574.0px;top:834.8px;height:26px;line-height:26px;font-size:19.8px;color:#1f1f1f;transform:scaleX(1.0579);transform-origin:0 50%;-webkit-text-stroke:0.300px currentColor;">260,000 ms</span>
<div style="left:2895.5px;top:828px;width:2px;height:160px;background:#d3e3fd;"></div>
<span class="t" style="left:2780.8px;top:834.8px;height:26px;line-height:26px;font-size:19.8px;color:#1f1f1f;transform:scaleX(1.0579);transform-origin:0 50%;-webkit-text-stroke:0.300px currentColor;">280,000 ms</span>
<div style="left:3102.4px;top:828px;width:2px;height:160px;background:#d3e3fd;"></div>
<span class="t" style="left:2987.7px;top:834.8px;height:26px;line-height:26px;font-size:19.8px;color:#1f1f1f;transform:scaleX(1.0579);transform-origin:0 50%;-webkit-text-stroke:0.300px currentColor;">300,000 ms</span>
<div style="left:3309.2px;top:828px;width:2px;height:160px;background:#d3e3fd;"></div>
<span class="t" style="left:3194.6px;top:834.8px;height:26px;line-height:26px;font-size:19.8px;color:#1f1f1f;transform:scaleX(1.0579);transform-origin:0 50%;-webkit-text-stroke:0.300px currentColor;">320,000 ms</span>
<span class="t" style="left:3400.5px;top:834.8px;height:26px;line-height:26px;font-size:19.8px;color:#1f1f1f;transform:scaleX(1.0670);transform-origin:0 50%;-webkit-text-stroke:0.300px currentColor;">34</span>
<div style="left:0px;top:828px;width:3.8px;height:160px;background:#a9c3f4;"></div>
<div style="left:-4px;top:828.4px;width:13.4px;height:37.2px;background:#dce6fb;border-radius:4.500px;border:1.600px solid #a4c0f7;"></div>
<div style="left:1.9px;top:840px;width:2.1px;height:14px;background:#1447c9;"></div>
<div style="left:3.8px;top:885px;width:18.4px;height:4px;background:#5a8cee;"></div>
<div style="left:61.9px;top:891px;width:4.1px;height:4px;background:#000;"></div>
<div style="left:67.9px;top:891px;width:2.1px;height:4px;background:#2a6a7a;"></div>
<div style="left:70.9px;top:891px;width:1.7px;height:4px;background:#e8c8f8;"></div>
<div style="left:74.3px;top:891px;width:3.8px;height:4px;background:#5cb860;"></div>
<div style="left:79.8px;top:891px;width:18.2px;height:4px;background:#5a8cee;"></div>
<div style="left:2840.2px;top:887.1px;width:12.6px;height:19.8px;background:#d5e1fb;"></div>
<div style="left:2825px;top:897px;width:3.9px;height:4px;background:#000;"></div>
<div style="left:2830.9px;top:897px;width:1.2px;height:4px;background:#2a6a7a;"></div>
<div style="left:2833.4px;top:897px;width:1.3px;height:4px;background:#e8c8f8;"></div>
<div style="left:2836.7px;top:897px;width:3.4px;height:4px;background:#5cb860;"></div>
<div style="left:2844px;top:891px;width:3px;height:10px;background:#5cb860;"></div>
<div style="left:2847px;top:891px;width:2px;height:10px;background:#5a8cee;"></div>
<div style="left:2854px;top:897px;width:1.1px;height:4px;background:#5a8cee;"></div>
<div style="left:2857px;top:897px;width:1.8px;height:4px;background:#5a8cee;"></div>
<div style="left:2860.7px;top:897px;width:18.1px;height:4px;background:#5a8cee;"></div>
<div style="left:2854px;top:903px;width:1.1px;height:3.8px;background:#8aaef3;"></div>
<div style="left:2857px;top:903px;width:18.1px;height:3.8px;background:#5a8cee;"></div>
<div style="left:0px;top:988px;width:3418px;height:2px;background:#d3e3fd;"></div>
<div style="left:0px;top:990px;width:1462px;height:54px;background:#f8f9fd;border-bottom:2px solid #d3e3fd;"></div>
<span class="t" style="left:11.3px;top:1000.9px;height:32px;line-height:32px;font-size:24.3px;color:#1f1f1f;transform:scaleX(0.9813);transform-origin:0 50%;-webkit-text-stroke:0.300px currentColor;">Name</span>
<div style="left:0px;top:990px;width:2px;height:54px;background:#d3e3fd;"></div>
<div style="left:0px;top:1044px;width:1462px;height:42px;background:#f8f9fd;"></div>
<svg style="left:11.2px;top:1052px;" width="25.8" height="25.8" viewBox="0 0 25.8 25.8"><circle cx="12.900" cy="12.900" r="12.900" fill="#d14134"/><path d="M7.400 7.400L18.400 18.400M18.400 7.400L7.400 18.400" stroke="#fff" stroke-width="3"/></svg>
<span class="t" style="left:46.9px;top:1048.9px;height:32px;line-height:32px;font-size:24.3px;color:#a82a20;transform:scaleX(1.0528);transform-origin:0 50%;-webkit-text-stroke:0.300px currentColor;">rh_login.jpeg</span>
<div style="left:0px;top:1086px;width:1462px;height:42px;background:#fff;"></div>
<svg style="left:11.2px;top:1094px;" width="25.8" height="25.8" viewBox="0 0 25.8 25.8"><circle cx="12.900" cy="12.900" r="12.900" fill="#d14134"/><path d="M7.400 7.400L18.400 18.400M18.400 7.400L7.400 18.400" stroke="#fff" stroke-width="3"/></svg>
<span class="t" style="left:46.9px;top:1090.9px;height:32px;line-height:32px;font-size:24.3px;color:#a82a20;transform:scaleX(1.0396);transform-origin:0 50%;-webkit-text-stroke:0.300px currentColor;">signin</span>
<div style="left:0px;top:1128px;width:1462px;height:42px;background:#f8f9fd;"></div>
<svg style="left:0px;top:1128px;" width="40" height="42" viewBox="0 0 40 42"><path d="M20.700 12.400H18.500Q15.700 12.400 15.700 15.200V17.600Q15.700 20.700 12.100 20.800Q15.700 20.900 15.700 24V26.500Q15.700 29.300 18.500 29.300H20.700M27.500 12.400H29.700Q32.500 12.400 32.500 15.200V17.600Q32.500 20.700 36.100 20.800Q32.500 20.900 32.500 24V26.500Q32.500 29.300 29.700 29.300H27.500" fill="none" stroke="#d9662e" stroke-width="2.500"/><rect x="23.100" y="15.500" width="2.800" height="2.800" fill="#d9662e"/><path d="M24.600 21.500L24.400 23.500L22.900 27.400" fill="none" stroke="#d9662e" stroke-width="2.600"/></svg>
<span class="t" style="left:46.9px;top:1132.9px;height:32px;line-height:32px;font-size:24.3px;color:#1f1f1f;transform:scaleX(1.0396);transform-origin:0 50%;-webkit-text-stroke:0.300px currentColor;">signin</span>
<div style="left:0px;top:1170px;width:1462px;height:42px;background:#fff;"></div>
<svg style="left:0px;top:1170px;" width="40" height="42" viewBox="0 0 40 42"><path d="M20.700 12.400H18.500Q15.700 12.400 15.700 15.200V17.600Q15.700 20.700 12.100 20.800Q15.700 20.900 15.700 24V26.500Q15.700 29.300 18.500 29.300H20.700M27.500 12.400H29.700Q32.500 12.400 32.500 15.200V17.600Q32.500 20.700 36.100 20.800Q32.500 20.900 32.500 24V26.500Q32.500 29.300 29.700 29.300H27.500" fill="none" stroke="#d9662e" stroke-width="2.500"/><rect x="23.100" y="15.500" width="2.800" height="2.800" fill="#d9662e"/><path d="M24.600 21.500L24.400 23.500L22.900 27.400" fill="none" stroke="#d9662e" stroke-width="2.600"/></svg>
<span class="t" style="left:46.9px;top:1174.9px;height:32px;line-height:32px;font-size:24.3px;color:#1f1f1f;transform:scaleX(1.0705);transform-origin:0 50%;-webkit-text-stroke:0.300px currentColor;">csrf_token</span>
<div style="left:0px;top:1212px;width:1462px;height:42px;background:#e0e0de;"></div>
<svg style="left:0px;top:1212px;" width="40" height="42" viewBox="0 0 40 42"><path d="M20.700 12.400H18.500Q15.700 12.400 15.700 15.200V17.600Q15.700 20.700 12.100 20.800Q15.700 20.900 15.700 24V26.500Q15.700 29.300 18.500 29.300H20.700M27.500 12.400H29.700Q32.500 12.400 32.500 15.200V17.600Q32.500 20.700 36.100 20.800Q32.500 20.900 32.500 24V26.500Q32.500 29.300 29.700 29.300H27.500" fill="none" stroke="#d9662e" stroke-width="2.500"/><rect x="23.100" y="15.500" width="2.800" height="2.800" fill="#d9662e"/><path d="M24.600 21.500L24.400 23.500L22.900 27.400" fill="none" stroke="#d9662e" stroke-width="2.600"/></svg>
<span class="t" style="left:46.9px;top:1216.9px;height:32px;line-height:32px;font-size:24.3px;color:#1f1f1f;transform:scaleX(1.0181);transform-origin:0 50%;-webkit-text-stroke:0.300px currentColor;">user/</span>
<div style="left:0px;top:1254px;width:1462px;height:42px;background:#fff;"></div>
<svg style="left:0px;top:1254px;" width="40" height="42" viewBox="0 0 40 42"><path d="M20.700 12.400H18.500Q15.700 12.400 15.700 15.200V17.600Q15.700 20.700 12.100 20.800Q15.700 20.900 15.700 24V26.500Q15.700 29.300 18.500 29.300H20.700M27.500 12.400H29.700Q32.500 12.400 32.500 15.200V17.600Q32.500 20.700 36.100 20.800Q32.500 20.900 32.500 24V26.500Q32.500 29.300 29.700 29.300H27.500" fill="none" stroke="#d9662e" stroke-width="2.500"/><rect x="23.100" y="15.500" width="2.800" height="2.800" fill="#d9662e"/><path d="M24.600 21.500L24.400 23.500L22.900 27.400" fill="none" stroke="#d9662e" stroke-width="2.600"/></svg>
<span class="t" style="left:46.9px;top:1258.9px;height:32px;line-height:32px;font-size:24.3px;color:#1f1f1f;transform:scaleX(1.0793);transform-origin:0 50%;-webkit-text-stroke:0.300px currentColor;">notifications</span>
<div style="left:0px;top:1296px;width:1462px;height:42px;background:#f8f9fd;"></div>
<svg style="left:0px;top:1296px;" width="40" height="42" viewBox="0 0 40 42"><path d="M20.700 12.400H18.500Q15.700 12.400 15.700 15.200V17.600Q15.700 20.700 12.100 20.800Q15.700 20.900 15.700 24V26.500Q15.700 29.300 18.500 29.300H20.700M27.500 12.400H29.700Q32.500 12.400 32.500 15.200V17.600Q32.500 20.700 36.100 20.800Q32.500 20.900 32.500 24V26.500Q32.500 29.300 29.700 29.300H27.500" fill="none" stroke="#d9662e" stroke-width="2.500"/><rect x="23.100" y="15.500" width="2.800" height="2.800" fill="#d9662e"/><path d="M24.600 21.500L24.400 23.500L22.900 27.400" fill="none" stroke="#d9662e" stroke-width="2.600"/></svg>
<span class="t" style="left:46.9px;top:1300.9px;height:32px;line-height:32px;font-size:24.3px;color:#1f1f1f;transform:scaleX(1.0113);transform-origin:0 50%;-webkit-text-stroke:0.300px currentColor;">messages</span>
<div style="left:0px;top:1338px;width:1462px;height:42px;background:#fff;"></div>
<svg style="left:0px;top:1338px;" width="40" height="42" viewBox="0 0 40 42"><path d="M20.700 12.400H18.500Q15.700 12.400 15.700 15.200V17.600Q15.700 20.700 12.100 20.800Q15.700 20.900 15.700 24V26.500Q15.700 29.300 18.500 29.300H20.700M27.500 12.400H29.700Q32.500 12.400 32.500 15.200V17.600Q32.500 20.700 36.100 20.800Q32.500 20.900 32.500 24V26.500Q32.500 29.300 29.700 29.300H27.500" fill="none" stroke="#d9662e" stroke-width="2.500"/><rect x="23.100" y="15.500" width="2.800" height="2.800" fill="#d9662e"/><path d="M24.600 21.500L24.400 23.500L22.900 27.400" fill="none" stroke="#d9662e" stroke-width="2.600"/></svg>
<span class="t" style="left:46.9px;top:1342.9px;height:32px;line-height:32px;font-size:24.3px;color:#1f1f1f;transform:scaleX(1.0527);transform-origin:0 50%;-webkit-text-stroke:0.300px currentColor;">robots?permissions=true&amp;token=false</span>
<div style="left:0px;top:1380px;width:1462px;height:42px;background:#f8f9fd;"></div>
<svg style="left:0px;top:1380px;" width="40" height="42" viewBox="0 0 40 42"><path d="M20.700 12.400H18.500Q15.700 12.400 15.700 15.200V17.600Q15.700 20.700 12.100 20.800Q15.700 20.900 15.700 24V26.500Q15.700 29.300 18.500 29.300H20.700M27.500 12.400H29.700Q32.500 12.400 32.500 15.200V17.600Q32.500 20.700 36.100 20.800Q32.500 20.900 32.500 24V26.500Q32.500 29.300 29.700 29.300H27.500" fill="none" stroke="#d9662e" stroke-width="2.500"/><rect x="23.100" y="15.500" width="2.800" height="2.800" fill="#d9662e"/><path d="M24.600 21.500L24.400 23.500L22.900 27.400" fill="none" stroke="#d9662e" stroke-width="2.600"/></svg>
<span class="t" style="left:46.9px;top:1384.9px;height:32px;line-height:32px;font-size:24.3px;color:#1f1f1f;transform:scaleX(1.0547);transform-origin:0 50%;-webkit-text-stroke:0.300px currentColor;">repository?last_modified=true&amp;namespace=user13&amp;public=true</span>
<div style="left:0px;top:1422px;width:1462px;height:42px;background:#fff;"></div>
<svg style="left:11.2px;top:1430px;" width="25.8" height="25.8" viewBox="0 0 25.8 25.8"><circle cx="12.900" cy="12.900" r="12.900" fill="#d14134"/><path d="M7.400 7.400L18.400 18.400M18.400 7.400L7.400 18.400" stroke="#fff" stroke-width="3"/></svg>
<span class="t" style="left:46.9px;top:1426.9px;height:32px;line-height:32px;font-size:24.3px;color:#a82a20;transform:scaleX(1.0607);transform-origin:0 50%;-webkit-text-stroke:0.300px currentColor;">registrysize/</span>
<div style="left:0px;top:1464px;width:1462px;height:42px;background:#f8f9fd;"></div>
<svg style="left:11.2px;top:1472px;" width="25.8" height="25.8" viewBox="0 0 25.8 25.8"><circle cx="12.900" cy="12.900" r="12.900" fill="#d14134"/><path d="M7.400 7.400L18.400 18.400M18.400 7.400L7.400 18.400" stroke="#fff" stroke-width="3"/></svg>
<span class="t" style="left:46.9px;top:1468.9px;height:32px;line-height:32px;font-size:24.3px;color:#a82a20;transform:scaleX(1.0477);transform-origin:0 50%;-webkit-text-stroke:0.300px currentColor;">organizations/</span>
<div style="left:0px;top:1506px;width:1462px;height:42px;background:#fff;"></div>
<svg style="left:11.2px;top:1514px;" width="25.8" height="25.8" viewBox="0 0 25.8 25.8"><circle cx="12.900" cy="12.900" r="12.900" fill="#d14134"/><path d="M7.400 7.400L18.400 18.400M18.400 7.400L7.400 18.400" stroke="#fff" stroke-width="3"/></svg>
<span class="t" style="left:46.9px;top:1510.9px;height:32px;line-height:32px;font-size:24.3px;color:#a82a20;transform:scaleX(1.0276);transform-origin:0 50%;-webkit-text-stroke:0.300px currentColor;">users/</span>
<div style="left:1462px;top:990px;width:2px;height:936px;background:#d3e3fd;"></div>
<div style="left:1464px;top:990px;width:1954px;height:54px;background:#edf1fa;border-bottom:2px solid #d3e3fd;"></div>
<svg style="left:1494.3px;top:1006.3px;" width="19.5" height="19.5" viewBox="0 0 19.5 19.5"><path d="M1 1L18.500 18.500M18.500 1L1 18.500" stroke="#474747" stroke-width="2.800"/></svg>
<span class="t" style="left:1556.8px;top:1003.2px;height:32px;line-height:32px;font-size:24.3px;color:#474747;transform:scaleX(1.0398);transform-origin:0 50%;-webkit-text-stroke:0.4px currentColor;">Headers</span>
<span class="t" style="left:1695.0px;top:1003.2px;height:32px;line-height:32px;font-size:24.3px;color:#474747;transform:scaleX(1.0333);transform-origin:0 50%;-webkit-text-stroke:0.4px currentColor;">Preview</span>
<span class="t" style="left:1827.0px;top:1003.2px;height:32px;line-height:32px;font-size:24.3px;color:#0b57d0;transform:scaleX(1.0145);transform-origin:0 50%;-webkit-text-stroke:0.4px currentColor;">Response</span>
<span class="t" style="left:1980.8px;top:1003.2px;height:32px;line-height:32px;font-size:24.3px;color:#474747;transform:scaleX(1.1056);transform-origin:0 50%;-webkit-text-stroke:0.4px currentColor;">Initiator</span>
<span class="t" style="left:2111.2px;top:1003.2px;height:32px;line-height:32px;font-size:24.3px;color:#474747;transform:scaleX(1.0624);transform-origin:0 50%;-webkit-text-stroke:0.4px currentColor;">Timing</span>
<span class="t" style="left:2230.7px;top:1003.2px;height:32px;line-height:32px;font-size:24.3px;color:#474747;transform:scaleX(1.0446);transform-origin:0 50%;-webkit-text-stroke:0.4px currentColor;">Cookies</span>
<div style="left:1806px;top:1038.8px;width:153.8px;height:4.5px;background:#0b57d0;border-radius:4px 4px 0 0;"></div>
<div style="left:1464px;top:1044px;width:1954px;height:831px;background:#fff;"></div>
<div style="left:0;top:1043px;width:3418px;height:832px;overflow:hidden;"><div style="left:0;top:-1043px;width:3418px;height:1926px;"><span class="t" style="left:1583.7px;top:1053.4px;height:30px;line-height:30px;font-size:22px;font-family:'Liberation Mono',monospace;letter-spacing:0.044px;-webkit-text-stroke:0.3px currentColor;"><span style="color:#1f1f1f">{</span></span><span class="t" style="left:1526px;top:1053.4px;height:30px;line-height:30px;font-size:22px;font-family:'Liberation Mono',monospace;color:#0b57d0;">1</span><span class="t" style="left:1583.7px;top:1084.2px;height:30px;line-height:30px;font-size:22px;font-family:'Liberation Mono',monospace;letter-spacing:0.044px;-webkit-text-stroke:0.3px currentColor;">    <span style="color:#a52a22">&quot;anonymous&quot;</span><span style="color:#1f1f1f">: </span><span style="color:#0b2e7c">false</span><span style="color:#1f1f1f">,</span></span><div style="left:1525.500px;top:1097px;width:12px;height:2.300px;background:#0b57d0;"></div><span class="t" style="left:1583.7px;top:1115.0px;height:30px;line-height:30px;font-size:22px;font-family:'Liberation Mono',monospace;letter-spacing:0.044px;-webkit-text-stroke:0.3px currentColor;">    <span style="color:#a52a22">&quot;username&quot;</span><span style="color:#1f1f1f">: </span><span style="color:#a52a22">&quot;user13&quot;</span><span style="color:#1f1f1f">,</span></span><div style="left:1525.500px;top:1128px;width:12px;height:2.300px;background:#0b57d0;"></div><span class="t" style="left:1583.7px;top:1145.8px;height:30px;line-height:30px;font-size:22px;font-family:'Liberation Mono',monospace;letter-spacing:0.044px;-webkit-text-stroke:0.3px currentColor;">    <span style="color:#a52a22">&quot;avatar&quot;</span><span style="color:#1f1f1f">: {</span></span><div style="left:1525.500px;top:1158px;width:12px;height:2.300px;background:#0b57d0;"></div><span class="t" style="left:1583.7px;top:1176.7px;height:30px;line-height:30px;font-size:22px;font-family:'Liberation Mono',monospace;letter-spacing:0.044px;-webkit-text-stroke:0.3px currentColor;">        <span style="color:#a52a22">&quot;name&quot;</span><span style="color:#1f1f1f">: </span><span style="color:#a52a22">&quot;user13&quot;</span><span style="color:#1f1f1f">,</span></span><div style="left:1525.500px;top:1189px;width:12px;height:2.300px;background:#0b57d0;"></div><span class="t" style="left:1583.7px;top:1207.5px;height:30px;line-height:30px;font-size:22px;font-family:'Liberation Mono',monospace;letter-spacing:0.044px;-webkit-text-stroke:0.3px currentColor;">        <span style="color:#a52a22">&quot;hash&quot;</span><span style="color:#1f1f1f">: </span><span style="color:#a52a22">&quot;fa6e045c466bb1fa79243d5d4ff9b63cf955ab10a83186232dd97c7bc19a625f&quot;</span><span style="color:#1f1f1f">,</span></span><div style="left:1525.500px;top:1220px;width:12px;height:2.300px;background:#0b57d0;"></div><span class="t" style="left:1583.7px;top:1238.3px;height:30px;line-height:30px;font-size:22px;font-family:'Liberation Mono',monospace;letter-spacing:0.044px;-webkit-text-stroke:0.3px currentColor;">        <span style="color:#a52a22">&quot;color&quot;</span><span style="color:#1f1f1f">: </span><span style="color:#a52a22">&quot;#b5cf6b&quot;</span><span style="color:#1f1f1f">,</span></span><div style="left:1525.500px;top:1251px;width:12px;height:2.300px;background:#0b57d0;"></div><span class="t" style="left:1583.7px;top:1269.1px;height:30px;line-height:30px;font-size:22px;font-family:'Liberation Mono',monospace;letter-spacing:0.044px;-webkit-text-stroke:0.3px currentColor;">        <span style="color:#a52a22">&quot;kind&quot;</span><span style="color:#1f1f1f">: </span><span style="color:#a52a22">&quot;user&quot;</span></span><div style="left:1525.500px;top:1282px;width:12px;height:2.300px;background:#0b57d0;"></div><span class="t" style="left:1583.7px;top:1299.9px;height:30px;line-height:30px;font-size:22px;font-family:'Liberation Mono',monospace;letter-spacing:0.044px;-webkit-text-stroke:0.3px currentColor;">    <span style="color:#1f1f1f">},</span></span><div style="left:1525.500px;top:1312px;width:12px;height:2.300px;background:#0b57d0;"></div><span class="t" style="left:1583.7px;top:1330.8px;height:30px;line-height:30px;font-size:22px;font-family:'Liberation Mono',monospace;letter-spacing:0.044px;-webkit-text-stroke:0.3px currentColor;">    <span style="color:#a52a22">&quot;can_create_repo&quot;</span><span style="color:#1f1f1f">: </span><span style="color:#0b2e7c">true</span><span style="color:#1f1f1f">,</span></span><div style="left:1525.500px;top:1343px;width:12px;height:2.300px;background:#0b57d0;"></div><span class="t" style="left:1583.7px;top:1361.6px;height:30px;line-height:30px;font-size:22px;font-family:'Liberation Mono',monospace;letter-spacing:0.044px;-webkit-text-stroke:0.3px currentColor;">    <span style="color:#a52a22">&quot;is_me&quot;</span><span style="color:#1f1f1f">: </span><span style="color:#0b2e7c">true</span><span style="color:#1f1f1f">,</span></span><div style="left:1525.500px;top:1374px;width:12px;height:2.300px;background:#0b57d0;"></div><span class="t" style="left:1583.7px;top:1392.4px;height:30px;line-height:30px;font-size:22px;font-family:'Liberation Mono',monospace;letter-spacing:0.044px;-webkit-text-stroke:0.3px currentColor;">    <span style="color:#a52a22">&quot;verified&quot;</span><span style="color:#1f1f1f">: </span><span style="color:#0b2e7c">true</span><span style="color:#1f1f1f">,</span></span><div style="left:1525.500px;top:1405px;width:12px;height:2.300px;background:#0b57d0;"></div><span class="t" style="left:1583.7px;top:1423.2px;height:30px;line-height:30px;font-size:22px;font-family:'Liberation Mono',monospace;letter-spacing:0.044px;-webkit-text-stroke:0.3px currentColor;">    <span style="color:#a52a22">&quot;email&quot;</span><span style="color:#1f1f1f">: </span><span style="color:#a52a22">&quot;user13@redhat.com&quot;</span><span style="color:#1f1f1f">,</span></span><div style="left:1525.500px;top:1436px;width:12px;height:2.300px;background:#0b57d0;"></div><span class="t" style="left:1583.7px;top:1454.0px;height:30px;line-height:30px;font-size:22px;font-family:'Liberation Mono',monospace;letter-spacing:0.044px;-webkit-text-stroke:0.3px currentColor;">    <span style="color:#a52a22">&quot;logins&quot;</span><span style="color:#1f1f1f">: [],</span></span><div style="left:1525.500px;top:1467px;width:12px;height:2.300px;background:#0b57d0;"></div><span class="t" style="left:1583.7px;top:1484.9px;height:30px;line-height:30px;font-size:22px;font-family:'Liberation Mono',monospace;letter-spacing:0.044px;-webkit-text-stroke:0.3px currentColor;">    <span style="color:#a52a22">&quot;invoice_email&quot;</span><span style="color:#1f1f1f">: </span><span style="color:#0b2e7c">false</span><span style="color:#1f1f1f">,</span></span><div style="left:1525.500px;top:1497px;width:12px;height:2.300px;background:#0b57d0;"></div><span class="t" style="left:1583.7px;top:1515.7px;height:30px;line-height:30px;font-size:22px;font-family:'Liberation Mono',monospace;letter-spacing:0.044px;-webkit-text-stroke:0.3px currentColor;">    <span style="color:#a52a22">&quot;invoice_email_address&quot;</span><span style="color:#1f1f1f">: </span><span style="color:#9f2074">null</span><span style="color:#1f1f1f">,</span></span><div style="left:1525.500px;top:1528px;width:12px;height:2.300px;background:#0b57d0;"></div><span class="t" style="left:1583.7px;top:1546.5px;height:30px;line-height:30px;font-size:22px;font-family:'Liberation Mono',monospace;letter-spacing:0.044px;-webkit-text-stroke:0.3px currentColor;">    <span style="color:#a52a22">&quot;preferred_namespace&quot;</span><span style="color:#1f1f1f">: </span><span style="color:#0b2e7c">false</span><span style="color:#1f1f1f">,</span></span><div style="left:1525.500px;top:1559px;width:12px;height:2.300px;background:#0b57d0;"></div><span class="t" style="left:1583.7px;top:1577.3px;height:30px;line-height:30px;font-size:22px;font-family:'Liberation Mono',monospace;letter-spacing:0.044px;-webkit-text-stroke:0.3px currentColor;">    <span style="color:#a52a22">&quot;tag_expiration_s&quot;</span><span style="color:#1f1f1f">: </span><span style="color:#1750eb">1209600</span><span style="color:#1f1f1f">,</span></span><div style="left:1525.500px;top:1590px;width:12px;height:2.300px;background:#0b57d0;"></div><span class="t" style="left:1583.7px;top:1608.1px;height:30px;line-height:30px;font-size:22px;font-family:'Liberation Mono',monospace;letter-spacing:0.044px;-webkit-text-stroke:0.3px currentColor;">    <span style="color:#a52a22">&quot;prompts&quot;</span><span style="color:#1f1f1f">: [</span></span><div style="left:1525.500px;top:1621px;width:12px;height:2.300px;background:#0b57d0;"></div><span class="t" style="left:1583.7px;top:1639.0px;height:30px;line-height:30px;font-size:22px;font-family:'Liberation Mono',monospace;letter-spacing:0.044px;-webkit-text-stroke:0.3px currentColor;">        <span style="color:#a52a22">&quot;enter_name&quot;</span><span style="color:#1f1f1f">,</span></span><div style="left:1525.500px;top:1651px;width:12px;height:2.300px;background:#0b57d0;"></div><span class="t" style="left:1583.7px;top:1669.8px;height:30px;line-height:30px;font-size:22px;font-family:'Liberation Mono',monospace;letter-spacing:0.044px;-webkit-text-stroke:0.3px currentColor;">        <span style="color:#a52a22">&quot;enter_company&quot;</span></span><div style="left:1525.500px;top:1682px;width:12px;height:2.300px;background:#0b57d0;"></div><span class="t" style="left:1583.7px;top:1700.6px;height:30px;line-height:30px;font-size:22px;font-family:'Liberation Mono',monospace;letter-spacing:0.044px;-webkit-text-stroke:0.3px currentColor;">    <span style="color:#1f1f1f">],</span></span><div style="left:1525.500px;top:1713px;width:12px;height:2.300px;background:#0b57d0;"></div><span class="t" style="left:1583.7px;top:1731.4px;height:30px;line-height:30px;font-size:22px;font-family:'Liberation Mono',monospace;letter-spacing:0.044px;-webkit-text-stroke:0.3px currentColor;">    <span style="color:#a52a22">&quot;company&quot;</span><span style="color:#1f1f1f">: </span><span style="color:#9f2074">null</span><span style="color:#1f1f1f">,</span></span><div style="left:1525.500px;top:1744px;width:12px;height:2.300px;background:#0b57d0;"></div><span class="t" style="left:1583.7px;top:1762.2px;height:30px;line-height:30px;font-size:22px;font-family:'Liberation Mono',monospace;letter-spacing:0.044px;-webkit-text-stroke:0.3px currentColor;">    <span style="color:#a52a22">&quot;family_name&quot;</span><span style="color:#1f1f1f">: </span><span style="color:#9f2074">null</span><span style="color:#1f1f1f">,</span></span><div style="left:1525.500px;top:1775px;width:12px;height:2.300px;background:#0b57d0;"></div><span class="t" style="left:1583.7px;top:1793.1px;height:30px;line-height:30px;font-size:22px;font-family:'Liberation Mono',monospace;letter-spacing:0.044px;-webkit-text-stroke:0.3px currentColor;">    <span style="color:#a52a22">&quot;given_name&quot;</span><span style="color:#1f1f1f">: </span><span style="color:#9f2074">null</span><span style="color:#1f1f1f">,</span></span><div style="left:1525.500px;top:1806px;width:12px;height:2.300px;background:#0b57d0;"></div><span class="t" style="left:1583.7px;top:1823.9px;height:30px;line-height:30px;font-size:22px;font-family:'Liberation Mono',monospace;letter-spacing:0.044px;-webkit-text-stroke:0.3px currentColor;">    <span style="color:#a52a22">&quot;location&quot;</span><span style="color:#1f1f1f">: </span><span style="color:#9f2074">null</span><span style="color:#1f1f1f">,</span></span><div style="left:1525.500px;top:1836px;width:12px;height:2.300px;background:#0b57d0;"></div><span class="t" style="left:1583.7px;top:1854.7px;height:30px;line-height:30px;font-size:22px;font-family:'Liberation Mono',monospace;letter-spacing:0.044px;-webkit-text-stroke:0.3px currentColor;">    <span style="color:#a52a22">&quot;is_free_account&quot;</span><span style="color:#1f1f1f">: </span><span style="color:#0b2e7c">true</span><span style="color:#1f1f1f">,</span></span><div style="left:1525.500px;top:1867px;width:12px;height:2.300px;background:#0b57d0;"></div></div></div>
<div style="left:1582.8px;top:1051.5px;width:1.5px;height:30px;background:#000;"></div>
<div style="left:1579.3px;top:1083px;width:2px;height:792px;background:#7cacf8;"></div>
<div style="left:1632.3px;top:1175px;width:1.5px;height:122.5px;background:#d3e3fd;"></div>
<div style="left:1632.3px;top:1637.4px;width:1.5px;height:61.3px;background:#d3e3fd;"></div>
<div style="left:0px;top:1874px;width:3418px;height:52px;background:#fff;border-top:2px solid #d3e3fd;"></div>
<span class="t" style="left:19.8px;top:1886.9px;height:32px;line-height:32px;font-size:24.3px;color:#474747;transform:scaleX(1.0293);transform-origin:0 50%;-webkit-text-stroke:0.300px currentColor;">12 requests</span>
<div style="left:168.6px;top:1887px;width:2px;height:31px;background:#d3e3fd;"></div>
<span class="t" style="left:189.4px;top:1886.9px;height:32px;line-height:32px;font-size:24.3px;color:#474747;transform:scaleX(1.0281);transform-origin:0 50%;-webkit-text-stroke:0.300px currentColor;">11.8 kB transferred</span>
<div style="left:418px;top:1887px;width:2px;height:31px;background:#d3e3fd;"></div>
<span class="t" style="left:438.9px;top:1886.9px;height:32px;line-height:32px;font-size:24.3px;color:#474747;transform:scaleX(1.0349);transform-origin:0 50%;-webkit-text-stroke:0.300px currentColor;">2.4 kB resources</span>
<div style="left:1462px;top:1874px;width:2px;height:52px;background:#d3e3fd;"></div>
<svg style="left:0px;top:0px;" width="3418" height="1926" viewBox="0 0 3418 1926"><path d="M1492 1892.100H1490Q1486.300 1892.100 1486.300 1895.800V1898.500Q1486.300 1902.100 1482 1902.100Q1486.300 1902.100 1486.300 1905.700V1908.400Q1486.300 1912.100 1490 1912.100H1492M1500 1892.100H1502Q1505.700 1892.100 1505.700 1895.800V1898.500Q1505.700 1902.100 1510 1902.100Q1505.700 1902.100 1505.700 1905.700V1908.400Q1505.700 1912.100 1502 1912.100H1500" fill="none" stroke="#3470ee" stroke-width="3.900" stroke-linejoin="round"/></svg>
<svg style="left:0px;top:0px;" width="3418" height="1926" viewBox="0 0 3418 1926"><path d="M0 1884C1.500 1906 11 1922 29 1926H0Z" fill="#b4b4b4"/><path d="M0 1897C1 1912 7 1921 14.500 1926H0Z" fill="#11180d"/></svg>
<svg style="left:0px;top:0px;" width="3418" height="1926" viewBox="0 0 3418 1926"><ellipse cx="3230" cy="80" rx="170" ry="75.500" fill="none" stroke="#e8401f" stroke-width="4.800"/>
<ellipse cx="819.900" cy="587.600" rx="170" ry="76.200" fill="none" stroke="#e8401f" stroke-width="4.800"/></svg>
</div></body></html>
